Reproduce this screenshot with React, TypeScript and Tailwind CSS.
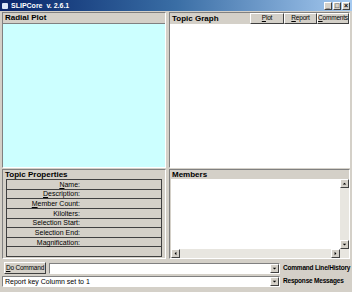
import React from 'react';

const props = ['Name:', 'Description:', 'Member Count:', 'Kilolters:', 'Selection Start:', 'Selection End:', 'Magnification:', ''];

function ArrowBox({ dir }: { dir: 'up' | 'down' | 'left' | 'right' }) {
  const pts: Record<string, string> = {
    up: '2,5 4,3 6,5',
    down: '2,3 4,5 6,3',
    left: '5,2 3,4 5,6',
    right: '3,2 5,4 3,6',
  };
  return (
    <div className="w-[9px] h-[9px] bg-[#d4d0c8] border border-t-white border-l-white border-r-[#404040] border-b-[#404040] flex items-center justify-center">
      <svg width="7" height="7" viewBox="0 0 8 8">
        <polygon points={pts[dir]} fill="#000" />
      </svg>
    </div>
  );
}

function Combo({ text }: { text?: string }) {
  return (
    <div className="flex-1 h-[11px] bg-white border border-t-[#808080] border-l-[#808080] border-b-white border-r-white flex items-center">
      <span className="flex-1 px-[2px] text-[7px] leading-none text-black whitespace-nowrap">{text}</span>
      <ArrowBox dir="down" />
    </div>
  );
}

function Underlined({ text }: { text: string }) {
  if (text === 'Name:' || text === 'Description:' || text === 'Member Count:') {
    return <><span className="underline">{text[0]}</span>{text.slice(1)}</>;
  }
  return <>{text}</>;
}

export default function App() {
  return (
    <div className="w-[352px] h-[292px] bg-[#d4d0c8] flex flex-col font-['Liberation_Sans',Arial,sans-serif] overflow-hidden">
      {/* title bar */}
      <div className="h-[11px] flex items-center bg-gradient-to-r from-[#0a246a] via-[#3a6ea5] to-[#a6caf0] px-[2px]">
        <div className="w-[6px] h-[6px] bg-[#d8e4f8] mr-[3px] rounded-[1px]"></div>
        <span className="text-white font-bold text-[7px] leading-none">SLIPCore&nbsp; v. 2.6.1</span>
        <div className="ml-auto flex gap-[1px]">
          {['_', '□', '×'].map(c => (
            <div key={c} className="w-[8px] h-[8px] bg-[#d4d0c8] border border-t-white border-l-white border-r-[#404040] border-b-[#404040] flex items-center justify-center text-[7px] leading-none text-black font-bold">{c}</div>
          ))}
        </div>
      </div>

      <div className="flex-1 flex flex-col px-[2px] pt-[1px]">
        {/* top row */}
        <div className="flex h-[156px] gap-[3px]">
          <div className="w-[164px] flex flex-col border border-t-[#808080] border-l-[#808080] border-r-white border-b-white">
            <div className="h-[10px] px-[2px] text-[8px] leading-[10px] font-bold text-black">Radial Plot</div>
            <div className="flex-1 bg-[#ccffff] border-t border-[#808080]"></div>
          </div>
          <div className="flex-1 flex flex-col border border-t-[#808080] border-l-[#808080] border-r-white border-b-white">
            <div className="h-[11px] flex items-center">
              <span className="px-[2px] text-[8px] font-bold text-black leading-none">Topic Graph</span>
              <div className="ml-auto flex h-[11px]">
                {[['P', 'lot', 'w-[34px]'], ['R', 'eport', 'w-[33px]'], ['C', 'omments', 'w-[32px]']].map(([u, r, w]) => (
                  <div key={u} className={`${w} h-[11px] border border-t-white border-l-white border-r-[#404040] border-b-[#404040] flex items-center justify-center text-[6.5px] tracking-[-0.2px] leading-none text-black whitespace-nowrap`}>
                    <span className="underline">{u}</span>{r}
                  </div>
                ))}
              </div>
            </div>
            <div className="flex-1 bg-white"></div>
          </div>
        </div>

        {/* bottom row */}
        <div className="flex h-[90px] gap-[3px] mt-[1px]">
          <div className="w-[164px] flex flex-col border border-t-[#808080] border-l-[#808080] border-r-white border-b-white">
            <div className="h-[9px] px-[2px] text-[8px] leading-[9px] font-bold text-black">Topic Properties</div>
            <div className="flex-1 mx-[3px] mb-[1px] border border-[#404040] flex flex-col">
              {props.map((p, i) => (
                <div key={i} className="flex-1 border-b border-[#404040] last:border-b-0 flex items-center">
                  <span className="w-[73px] text-right text-[7px] leading-none text-black whitespace-nowrap">
                    <Underlined text={p} />
                  </span>
                </div>
              ))}
            </div>
          </div>
          <div className="flex-1 flex flex-col border border-t-[#808080] border-l-[#808080] border-r-white border-b-white">
            <div className="h-[9px] px-[2px] text-[8px] leading-[9px] font-bold text-black">Members</div>
            <div className="flex-1 flex bg-white ml-[1px]">
              <div className="flex-1 flex flex-col">
                <div className="flex-1"></div>
                <div className="h-[9px] bg-[#e8e6e0] flex justify-between">
                  <ArrowBox dir="left" />
                  <ArrowBox dir="right" />
                </div>
              </div>
              <div className="w-[9px] bg-[#e8e6e0] flex flex-col justify-between pb-[9px]">
                <ArrowBox dir="up" />
                <ArrowBox dir="down" />
              </div>
            </div>
          </div>
        </div>

        {/* command rows */}
        <div className="flex items-center h-[14px] mt-[2px] pl-[2px]">
          <div className="w-[42px] h-[12px] border border-t-white border-l-white border-r-[#404040] border-b-[#404040] flex items-center justify-center text-[6.5px] tracking-[-0.2px] leading-none text-black mr-[3px] whitespace-nowrap">
            <span className="underline">D</span>o Command
          </div>
          <Combo />
          <span className="w-[70px] pl-[3px] text-[6.5px] tracking-[-0.2px] font-bold leading-none text-black whitespace-nowrap">Command Line/History</span>
        </div>
        <div className="flex items-center h-[12px]">
          <Combo text="Report key Column set to 1" />
          <span className="w-[70px] pl-[3px] text-[6.5px] tracking-[-0.2px] font-bold leading-none text-black whitespace-nowrap">Response Messages</span>
        </div>
      </div>
    </div>
  );
}
